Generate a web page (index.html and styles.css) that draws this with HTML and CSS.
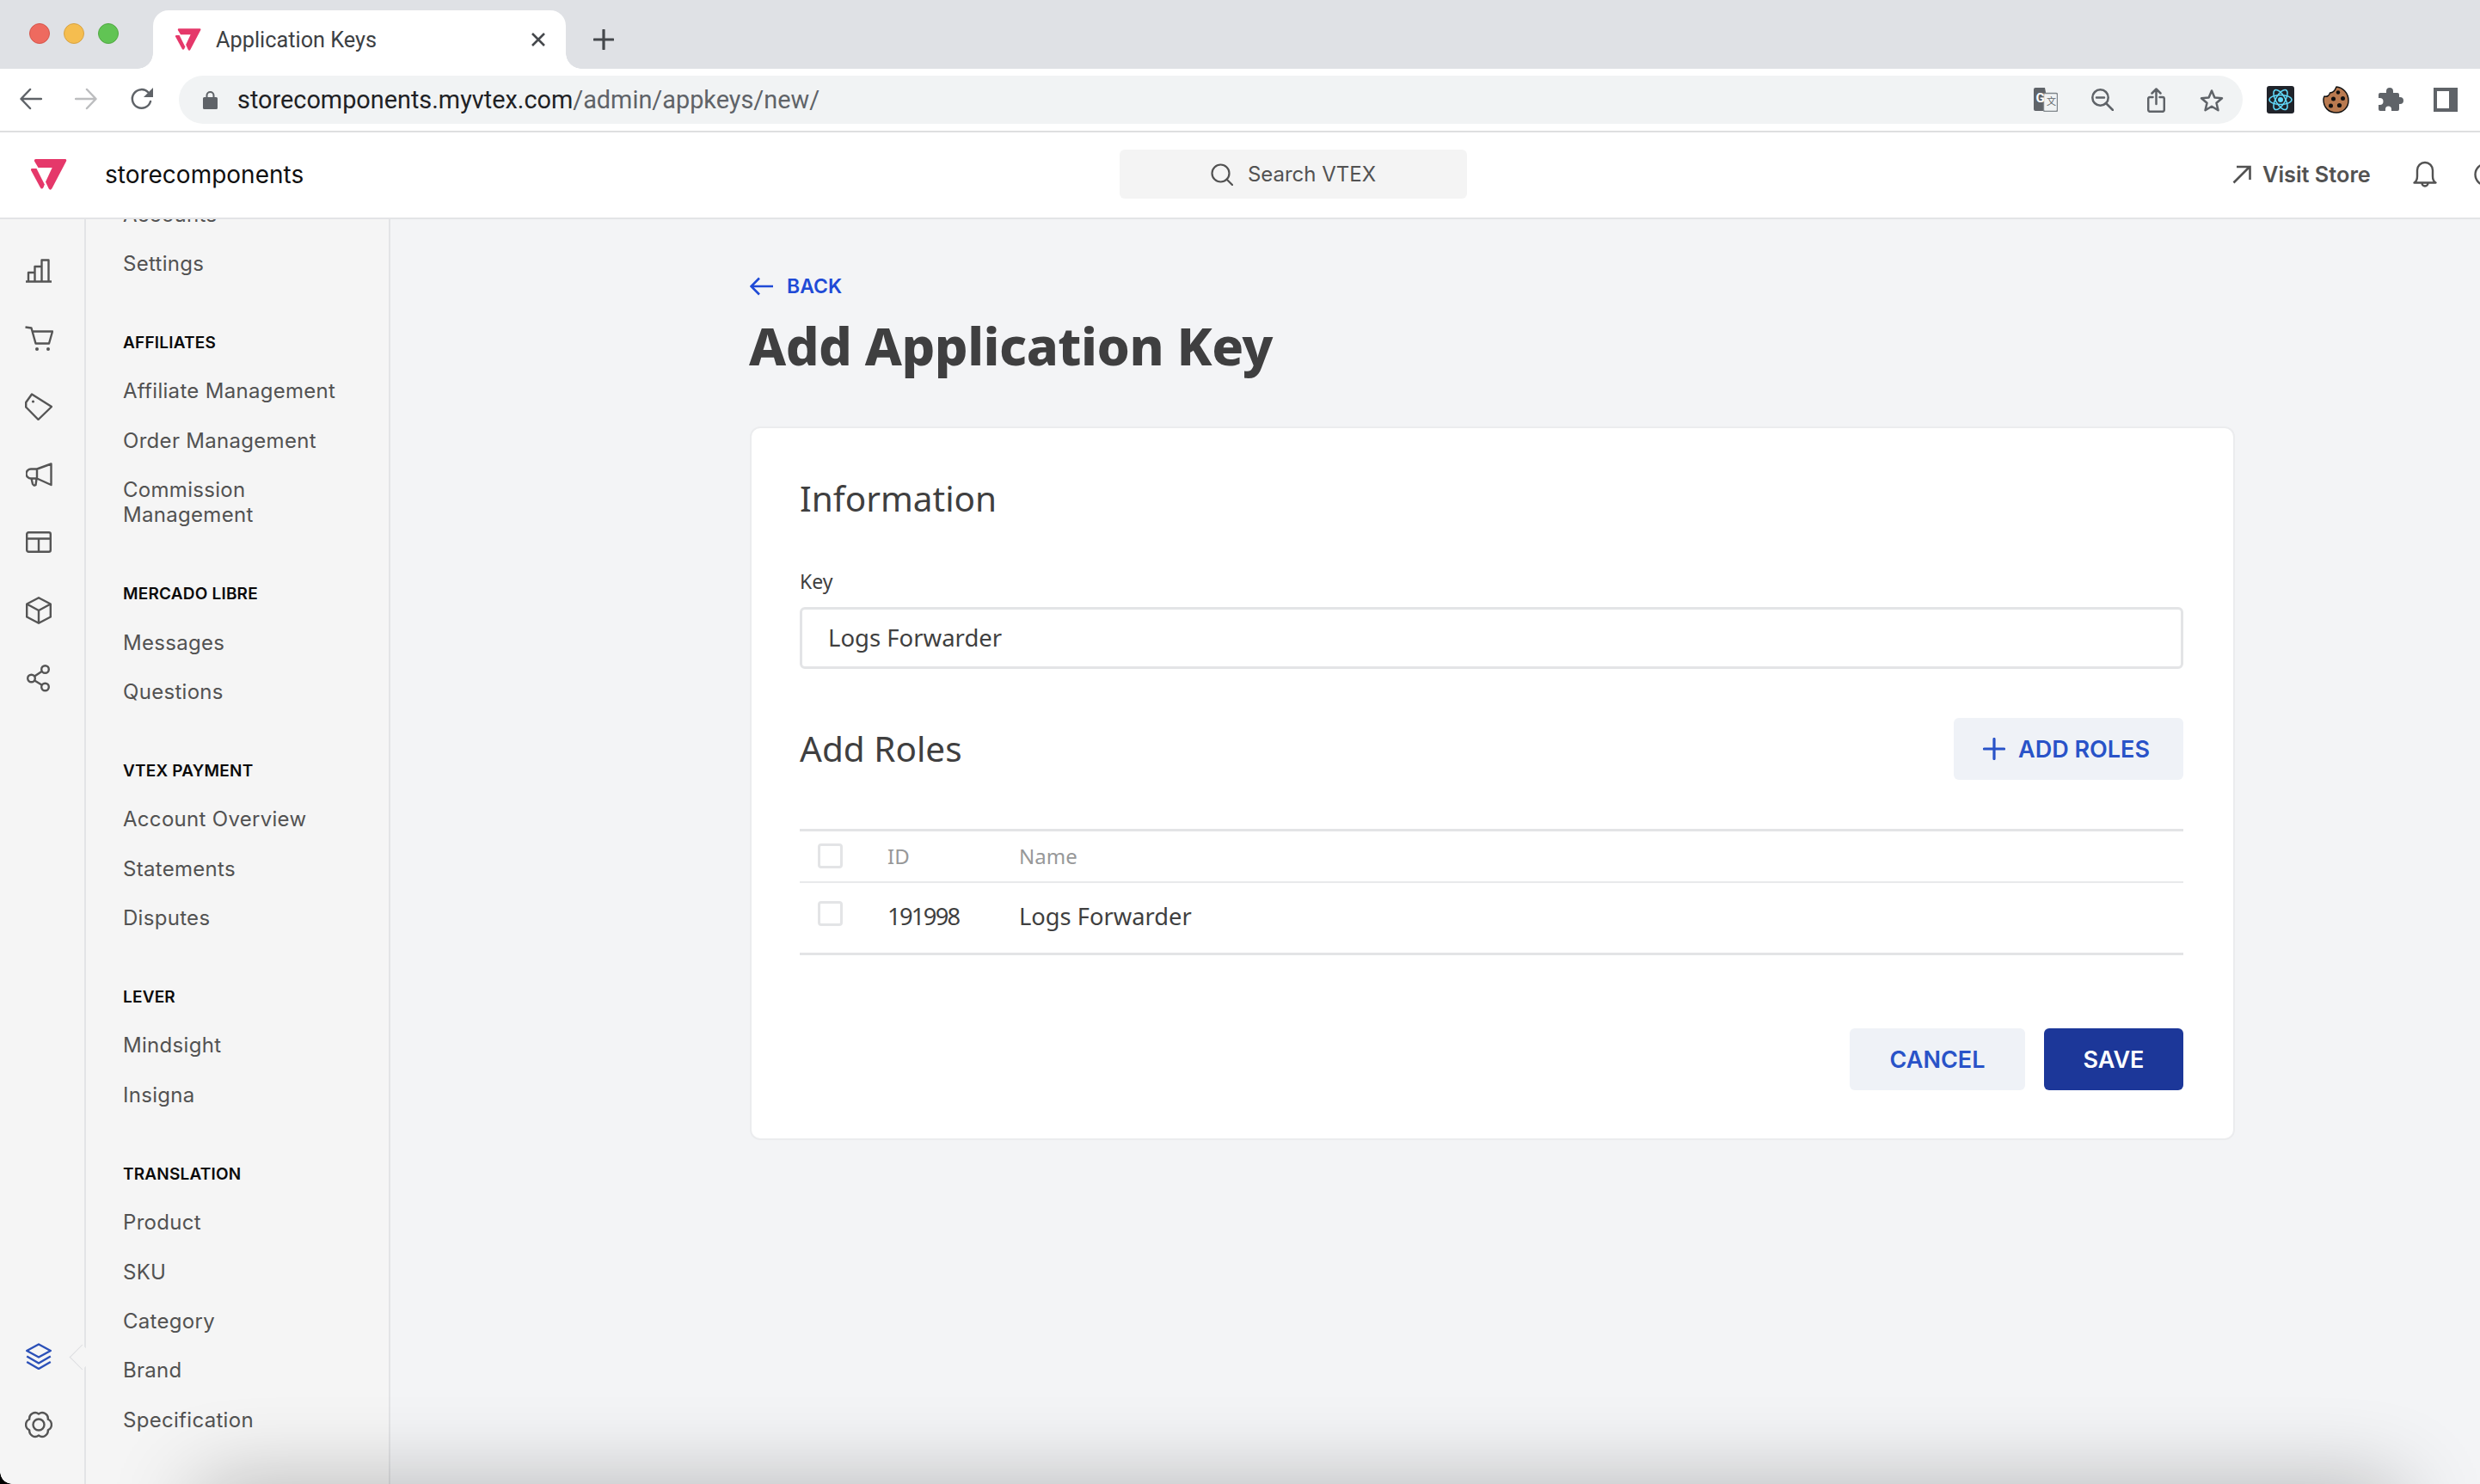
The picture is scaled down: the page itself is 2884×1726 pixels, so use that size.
FILE: index.html
```html
<!DOCTYPE html>
<html lang="en">
<head>
    <meta charset="UTF-8">
    <title>Application Keys</title>
    <link rel="stylesheet" href="styles.css">
</head>
<body>
    <svg class="sprite" xmlns="http://www.w3.org/2000/svg">
        <symbol id="vtex-logo" viewBox="0 0 42 36">
            <path d="M5.5 0H39.5Q42 0 41 2.5L24.5 34Q22.5 37.5 20.5 34L17 26.5L24.7 10H8.5L4 2.5Q3.5 0 5.5 0Z"/>
            <path d="M1 11H6.5L15.8 29.5L14.5 33Q12.5 36 10.8 33L0 13Q-.3 11 1 11Z"/>
        </symbol>
    </svg>

    <!-- Browser tabs -->
    <div class="tabstrip">
        <div class="lights">
            <span class="light light-red"></span>
            <span class="light light-yellow"></span>
            <span class="light light-green"></span>
        </div>
        <div class="tab">
            <svg class="tab-logo"><use href="#vtex-logo"/></svg>
            <span class="tab-title">Application Keys</span>
            <svg class="tab-close" viewBox="0 0 18 18"><path d="M2 2L16 16M16 2L2 16"/></svg>
        </div>
        <svg class="tab-new" viewBox="0 0 24 24"><path d="M12 1V23M1 12H23"/></svg>
    </div>

    <!-- Browser toolbar -->
    <div class="toolbar">
        <svg class="tool-back" viewBox="0 0 26 26"><path d="M25 13H2M12 2L1.5 13L12 24"/></svg>
        <svg class="tool-forward" viewBox="0 0 26 26"><path d="M1 13H24M14 2L24.5 13L14 24"/></svg>
        <svg class="tool-reload" viewBox="0 0 28 28"><path d="M24 17A10.800 10.800 0 1 1 21.500 6.500"/><path class="solid" d="M27 1V12H16Z"/></svg>
        <div class="omnibox">
            <svg class="lock" viewBox="0 0 17 22"><path class="solid" d="M1.500 8H3.500V6A5 5 0 0 1 13.500 6V8H15.500Q17 8 17 9.500V20.500Q17 22 15.500 22H1.500Q0 22 0 20.500V9.500Q0 8 1.500 8ZM5.500 8H11.500V6A3 3 0 0 0 5.500 6Z"/></svg>
            <span class="url">storecomponents.myvtex.com<span class="url-path">/admin/appkeys/new/</span></span>
            <div class="omni-actions">
                <svg class="act-translate" viewBox="0 0 28 28">
                    <path class="solid" d="M2 0H13L18 27H2Q0 27 0 25V2Q0 0 2 0Z"/>
                    <rect class="translate-page" x="11.500" y="6.500" width="16" height="21" rx="1.500"/>
                    <text class="translate-g" x="2.500" y="17">G</text>
                    <text class="translate-x" x="15" y="20">文</text>
                </svg>
                <svg class="act-zoom" viewBox="0 0 26 26"><circle cx="10.500" cy="10.500" r="9.200"/><path d="M6 10.500H15M17 17L25 25"/></svg>
                <svg class="act-share" viewBox="0 0 21 29"><path d="M6.500 11H3Q1.200 11 1.200 13V25.500Q1.200 27.800 3 27.800H18Q19.800 27.800 19.800 25.500V13Q19.800 11 18 11H14.500M10.500 19V1.500M5.500 6.500L10.500 1.500L15.500 6.500"/></svg>
                <svg class="act-star" viewBox="0 0 30 29"><path d="M15 3.500L18.400 11.500L27 12.200L20.500 17.800L22.500 26.200L15 21.700L7.500 26.200L9.500 17.800L3 12.200L11.600 11.500Z"/></svg>
            </div>
        </div>
        <div class="extensions">
            <svg class="ext-react" viewBox="0 0 32 32">
                <rect width="32" height="32" rx="3" fill="#20232a"/>
                <g fill="none" stroke="#61dafb" stroke-width="1.500">
                    <ellipse cx="16" cy="16" rx="13" ry="5.500"/>
                    <ellipse cx="16" cy="16" rx="13" ry="5.500" transform="rotate(60 16 16)"/>
                    <ellipse cx="16" cy="16" rx="13" ry="5.500" transform="rotate(120 16 16)"/>
                </g>
                <circle cx="16" cy="16" r="3" fill="#61dafb"/>
            </svg>
            <svg class="ext-cookie" viewBox="0 0 31 32">
                <path d="M16 1C23 1.500 30 8 30 17C30 25 24 31 16 31C7 31 1 25 1 16C1 14.500 1.500 13 2 12C5 13 8 11 8.500 8C11.500 8 14.500 5 16 1Z"/>
                <circle cx="18" cy="7.500" r="2.200" fill="#111"/>
                <circle cx="12.500" cy="15" r="2.500" fill="#111"/>
                <circle cx="23.500" cy="14.500" r="2.500" fill="#111"/>
                <circle cx="9.500" cy="23" r="2.500" fill="#111"/>
                <circle cx="19.500" cy="22.500" r="2.600" fill="#111"/>
            </svg>
            <svg class="ext-puzzle" viewBox="0 0 29 29"><path d="M2 6H9V4A4 4 0 0 1 17 4V6H22Q24 6 24 8V11H25A4 4 0 0 1 25 19H24V25Q24 27 22 27H15V25A3.500 3.500 0 0 0 8 25V27H2Q0 27 0 25V20H1.500A4 4 0 0 0 1.500 12H0V8Q0 6 2 6Z"/></svg>
            <svg class="ext-panel" viewBox="0 0 28 28"><path d="M0 0H28V28H0ZM4 4V24H18V4Z" fill-rule="evenodd"/></svg>
        </div>
    </div>

    <!-- VTEX admin -->
    <header class="topbar">
        <div class="brand">
            <svg class="brand-logo"><use href="#vtex-logo"/></svg>
            <span class="brand-name">storecomponents</span>
        </div>
        <div class="search">
            <svg viewBox="0 0 26 26"><circle cx="11.500" cy="11.500" r="10"/><path d="M18.500 18.500L25 25"/></svg>
            <span>Search VTEX</span>
        </div>
        <div class="top-actions">
            <svg class="visit-arrow" viewBox="0 0 22 22"><path d="M1.500 20.500L20 2M5 2H20.500V17"/></svg>
            <span class="visit-label">Visit Store</span>
            <svg class="bell" viewBox="0 0 28 32"><path d="M1.500 25.500Q5 23.500 5 18V11A9 9 0 0 1 23 11V18Q23 23.500 26.500 25.500ZM10.500 26A3.500 3.500 0 0 0 17.500 26"/></svg>
            <svg class="help" viewBox="0 0 28 28"><circle cx="14" cy="14" r="12.500"/></svg>
        </div>
    </header>

    <div class="workspace">
        <aside class="rail">
            <div class="rail-group">
                <div class="rail-item"><svg viewBox="0 0 32 28" width="32" height="28"><path d="M1 26.500H31M4 26.500V16H11.500V26.500M11.500 26.500V9H19.500V26.500M19.500 26.500V1.500H27.500V26.500"/></svg></div>
                <div class="rail-item"><svg viewBox="0 0 33 30" width="33" height="30"><path d="M.5 1.500L7.500 2.500L12.500 20.500H28L32 6.500H9"/><circle class="solid" cx="14" cy="27" r="2"/><circle class="solid" cx="27" cy="27" r="2"/></svg></div>
                <div class="rail-item"><svg viewBox="0 0 32 32" width="32" height="32"><path d="M1.200 11L8 1.500L31 16L15.500 31L1.200 16.500Z"/><circle class="solid" cx="9.500" cy="10" r="1.600"/></svg></div>
                <div class="rail-item"><svg viewBox="0 0 31 28" width="31" height="28"><path d="M29.500 1.500V26L13 18.500H6A5.500 5.500 0 0 1 6 7.500H13ZM13 7.500V18.500M6.500 18.500L8 25Q9.500 27.500 11.500 26L12.500 19"/></svg></div>
                <div class="rail-item"><svg viewBox="0 0 30 25" width="30" height="25"><rect x="1.200" y="1.200" width="27.600" height="22.600" rx="2"/><path d="M1.200 8.500H28.800M15 8.500V23.800"/></svg></div>
                <div class="rail-item"><svg viewBox="0 0 30 32" width="30" height="32"><path d="M15 1.200L28.800 8.500V23.500L15 30.800L1.200 23.500V8.500ZM1.200 8.500L15 16L28.800 8.500M15 16V30.800"/></svg></div>
                <div class="rail-item"><svg viewBox="0 0 29 32" width="29" height="32"><circle cx="21.500" cy="5.500" r="4.300"/><circle cx="5.500" cy="16" r="4.300"/><circle cx="21.500" cy="26" r="4.300"/><path d="M17.800 7.800L9.200 13.600M9.200 18.400L17.800 23.700"/></svg></div>
            </div>
            <div class="rail-group">
                <div class="rail-item rail-item-active"><svg viewBox="0 0 30 31" width="30" height="31"><path d="M15 1.500L28.800 9L15 16.500L1.200 9ZM1.200 15.500L15 23.500L28.800 15.500M1.200 22L15 30L28.800 22"/></svg></div>
                <div class="rail-item"><svg viewBox="0 0 32 32" width="32" height="32"><path d="M16 3.500A6.800 6.800 0 0 1 26.800 9.750A6.800 6.800 0 0 1 26.800 22.250A6.800 6.800 0 0 1 16 28.500A6.800 6.800 0 0 1 5.200 22.250A6.800 6.800 0 0 1 5.200 9.750A6.800 6.800 0 0 1 16 3.500Z"/><circle cx="16" cy="16" r="6.500"/></svg></div>
            </div>
        </aside>

        <nav class="sidenav">
            <div class="nav-scroll">
                <section class="nav-section">
                    <a class="nav-link">Accounts</a>
                    <a class="nav-link">Settings</a>
                </section>
                <section class="nav-section">
                    <h4 class="nav-title">AFFILIATES</h4>
                    <a class="nav-link">Affiliate Management</a>
                    <a class="nav-link">Order Management</a>
                    <a class="nav-link">Commission<br>Management</a>
                </section>
                <section class="nav-section">
                    <h4 class="nav-title">MERCADO LIBRE</h4>
                    <a class="nav-link">Messages</a>
                    <a class="nav-link">Questions</a>
                </section>
                <section class="nav-section">
                    <h4 class="nav-title">VTEX PAYMENT</h4>
                    <a class="nav-link">Account Overview</a>
                    <a class="nav-link">Statements</a>
                    <a class="nav-link">Disputes</a>
                </section>
                <section class="nav-section">
                    <h4 class="nav-title">LEVER</h4>
                    <a class="nav-link">Mindsight</a>
                    <a class="nav-link">Insigna</a>
                </section>
                <section class="nav-section">
                    <h4 class="nav-title">TRANSLATION</h4>
                    <a class="nav-link">Product</a>
                    <a class="nav-link">SKU</a>
                    <a class="nav-link">Category</a>
                    <a class="nav-link">Brand</a>
                    <a class="nav-link">Specification</a>
                </section>
            </div>
        </nav>

        <main class="content">
            <a class="back-link">
                <svg viewBox="0 0 28 22"><path d="M27 11H2M11 1.500L1.500 11L11 20.500"/></svg>
                <span>BACK</span>
            </a>
            <h1 class="page-title">Add Application Key</h1>

            <div class="card">
                <h2 class="card-heading">Information</h2>
                <label class="field-label">Key</label>
                <div class="text-field">Logs Forwarder</div>

                <div class="roles-head">
                    <h2 class="card-heading">Add Roles</h2>
                    <button class="btn btn-light btn-add">
                        <svg viewBox="0 0 26 26"><path d="M13 1.500V24.500M1.500 13H24.500"/></svg>
                        ADD ROLES
                    </button>
                </div>

                <div class="roles-table">
                    <div class="table-row table-row-head">
                        <span class="checkbox"></span>
                        <span>ID</span>
                        <span>Name</span>
                    </div>
                    <div class="table-row">
                        <span class="checkbox"></span>
                        <span class="cell-id">191998</span>
                        <span>Logs Forwarder</span>
                    </div>
                </div>

                <div class="form-actions">
                    <button class="btn btn-light btn-cancel">CANCEL</button>
                    <button class="btn btn-primary btn-save">SAVE</button>
                </div>
            </div>
        </main>
    </div>

    <!-- Window edge: shadow of whatever sits below, and the rounded corner -->
    <div class="under-shadow"></div>
    <div class="window-corner"></div>
</body>
</html>
```

FILE: styles.css
```css
* {
    box-sizing: border-box;
}
html, body {
    margin: 0;
    height: 100%;
}
body {
    position: relative;
    width: 2884px;
    height: 1726px;
    overflow: hidden;
    display: flex;
    flex-direction: column;
    font-family: Inter, "Liberation Sans", sans-serif;
    color: #3f3f40;
    background-color: #f3f4f6;
}
svg {
    display: block;
    flex: none;
}
.sprite {
    position: absolute;
    width: 0;
    height: 0;
}

/* tabs */
.tabstrip {
    height: 80px;
    flex: none;
    display: flex;
    background-color: #dfe1e5;
    padding-left: 34px;
}
.lights {
    display: flex;
    gap: 16px;
    padding-top: 27px;
    width: 144px;
}
.light {
    width: 24px;
    height: 24px;
    border-radius: 50%;
}
.light-red { background-color: #ee6a5f; border: 1px solid #d5564c; }
.light-yellow { background-color: #f5bd4f; border: 1px solid #d6a243; }
.light-green { background-color: #61c454; border: 1px solid #52a843; }
.tab {
    position: relative;
    width: 480px;
    height: 68px;
    margin-top: 12px;
    background-color: white;
    border-radius: 18px 18px 0 0;
    display: flex;
    align-items: center;
    padding: 0 23px 0 26px;
}
.tab::before,
.tab::after {
    content: "";
    position: absolute;
    bottom: 0;
    width: 18px;
    height: 18px;
}
.tab::before {
    left: -18px;
    background: radial-gradient(circle at 0 0, #dfe1e5 17.500px, white 18px);
}
.tab::after {
    right: -18px;
    background: radial-gradient(circle at 100% 0, #dfe1e5 17.500px, white 18px);
}
.tab-logo {
    width: 30px;
    height: 26px;
    fill: #e5386a;
}
.tab-title {
    margin-left: 17px;
    font: 25.300px Roboto, sans-serif;
    color: #3c4043;
}
.tab-close {
    width: 18px;
    height: 18px;
    margin-left: auto;
    fill: none;
    stroke: #45484c;
    stroke-width: 2.600;
}
.tab-new {
    width: 24px;
    height: 24px;
    margin: 34px 0 0 32px;
    fill: none;
    stroke: #45484c;
    stroke-width: 3.200;
    stroke-linecap: round;
}

/* toolbar */
.toolbar {
    height: 74px;
    flex: none;
    display: flex;
    align-items: flex-start;
    background-color: white;
    border-bottom: 2px solid #dedfe0;
    padding: 8px 26px 0 23px;
}
.toolbar svg path,
.toolbar .act-zoom circle {
    fill: none;
    stroke: #5f6368;
    stroke-width: 2.500;
    stroke-linecap: round;
    stroke-linejoin: round;
}
.toolbar svg .solid {
    fill: #5f6368;
    stroke: none;
}
.tool-back,
.tool-forward {
    width: 26px;
    height: 26px;
    margin-top: 14px;
}
.tool-forward {
    margin-left: 38px;
}
.toolbar .tool-forward path {
    stroke: #bcbdbf;
}
.tool-reload {
    width: 28px;
    height: 28px;
    margin: 13px 0 0 38px;
}
.omnibox {
    width: 2400px;
    height: 56px;
    margin-left: 29px;
    display: flex;
    align-items: center;
    background-color: #f1f3f4;
    border-radius: 28px;
    padding: 0 21px 0 28px;
}
.lock {
    width: 17px;
    height: 22px;
}
.url {
    margin-left: 23px;
    font: 28.850px Roboto, sans-serif;
    color: #202124;
}
.url-path {
    color: #5f6368;
}
.omni-actions {
    margin-left: auto;
    display: flex;
    align-items: center;
    gap: 39px;
}
.act-translate {
    width: 28px;
    height: 28px;
}
.toolbar .translate-page {
    fill: #f1f3f4;
    stroke: #80868b;
    stroke-width: 1.400;
}
.translate-g {
    font: bold 15px Roboto, sans-serif;
    fill: white;
}
.translate-x {
    font: 11px "Noto Sans CJK SC", sans-serif;
    fill: #5f6368;
}
.act-zoom {
    width: 26px;
    height: 26px;
}
.act-share {
    width: 21px;
    height: 29px;
}
.act-star {
    width: 30px;
    height: 29px;
}
.extensions {
    display: flex;
    align-items: center;
    height: 56px;
}
.ext-react {
    width: 32px;
    height: 32px;
    margin-left: 28px;
}
.ext-cookie {
    width: 31px;
    height: 32px;
    margin-left: 33px;
}
.toolbar .ext-cookie path {
    fill: #b97a50;
    stroke: #111;
    stroke-width: 1.500;
}
.ext-puzzle {
    width: 29px;
    height: 29px;
    margin-left: 34px;
}
.toolbar .ext-puzzle path {
    fill: #5f6368;
    stroke: none;
}
.ext-panel {
    width: 28px;
    height: 28px;
    margin-left: 35px;
}
.toolbar .ext-panel path {
    fill: #5f6368;
    stroke: none;
}

/* admin top bar */
.topbar {
    height: 101px;
    flex: none;
    display: flex;
    align-items: center;
    background-color: white;
    border-bottom: 2px solid #e3e4e6;
    padding-bottom: 2px;
    overflow: hidden;
}
.brand {
    width: 1302px;
    flex: none;
    display: flex;
    align-items: center;
    padding-left: 36px;
}
.brand-logo {
    width: 42px;
    height: 36px;
    fill: #e5386a;
}
.brand-name {
    margin-left: 44px;
    font-size: 28px;
    color: #0f0f10;
}
.search {
    width: 404px;
    height: 57px;
    flex: none;
    display: flex;
    align-items: center;
    justify-content: center;
    gap: 17px;
    background-color: #f4f4f4;
    border-radius: 6px;
    font-size: 24px;
    color: #525252;
}
.search svg {
    width: 26px;
    height: 26px;
    fill: none;
    stroke: #525252;
    stroke-width: 2.200;
    stroke-linecap: round;
}
.top-actions {
    display: flex;
    align-items: center;
    padding-left: 890px;
    color: #525252;
}
.visit-arrow {
    width: 22px;
    height: 22px;
    fill: none;
    stroke: #525252;
    stroke-width: 2.600;
}
.visit-label {
    margin-left: 13px;
    font-size: 25.300px;
    font-weight: 600;
    white-space: nowrap;
}
.bell {
    width: 28px;
    height: 32px;
    margin-left: 49px;
    fill: none;
    stroke: #525252;
    stroke-width: 2.400;
    stroke-linejoin: round;
}
.help {
    width: 28px;
    height: 28px;
    margin-left: 43px;
    fill: none;
    stroke: #525252;
    stroke-width: 2.400;
}

/* sidebar */
.workspace {
    flex: 1;
    display: flex;
    min-height: 0;
}
.rail {
    width: 100px;
    flex: none;
    display: flex;
    flex-direction: column;
    justify-content: space-between;
    padding: 20px 8px 30px 0;
    background-color: #f5f5f5;
    border-right: 2px solid #e3e4e6;
}
.rail-item {
    height: 79px;
    display: flex;
    align-items: center;
    justify-content: center;
    position: relative;
}
.rail-item svg {
    fill: none;
    stroke: #555;
    stroke-width: 2.400;
    stroke-linejoin: round;
}
.rail-item svg .solid {
    fill: #555;
    stroke: none;
}
.rail-item-active svg {
    stroke: #2b50b8;
}
.rail-item-active::after {
    content: "";
    position: absolute;
    right: -16px;
    top: 30px;
    width: 20px;
    height: 20px;
    background-color: #f5f5f5;
    border-left: 1px solid #dcdde0;
    border-bottom: 1px solid #dcdde0;
    transform: rotate(45deg);
}
.sidenav {
    width: 354px;
    flex: none;
    background-color: #f5f5f5;
    border-right: 2px solid #e3e4e6;
    overflow: hidden;
}
.nav-scroll {
    margin-top: -34.500px;
    padding-left: 43px;
}
.nav-section {
    margin-bottom: 49.500px;
}
.nav-title {
    margin: 0 0 13.500px;
    font-size: 19px;
    line-height: 28px;
    font-weight: 600;
    letter-spacing: .2px;
    color: #0a0a0a;
}
.nav-link {
    display: block;
    padding: 14.200px 0;
    font-size: 24px;
    line-height: 29px;
    letter-spacing: .3px;
    color: #525252;
}

/* main */
.content {
    flex: 1;
    padding: 63px 0 0 418px;
}
.back-link {
    display: flex;
    align-items: center;
    gap: 15px;
    height: 30px;
    font-size: 23px;
    font-weight: 600;
    color: #1f4ad6;
}
.back-link svg {
    width: 28px;
    height: 22px;
    fill: none;
    stroke: #1f4ad6;
    stroke-width: 2.600;
}
.page-title {
    margin: 20px 0 60px -1px;
    font: 800 61px/68px "Noto Sans", sans-serif;
    letter-spacing: -.5px;
    color: #3f3f40;
}
.card {
    width: 1727px;
    height: 830px;
    padding: 58px 58px 58px 56px;
    background-color: white;
    border: 2px solid #ebecee;
    border-radius: 12px;
}
.card-heading {
    margin: 0;
    font: normal 40.500px/48px "Noto Sans", sans-serif;
    color: #3f3f40;
}
.field-label {
    display: block;
    margin-top: 57px;
    font: 23px/30px "Noto Sans", sans-serif;
    color: #3f3f40;
}
.text-field {
    height: 72px;
    margin-top: 15px;
    padding-left: 30px;
    border: 3px solid #e3e4e6;
    border-radius: 6px;
    font: 27.500px/66px "Noto Sans", sans-serif;
    color: #3f3f40;
}
.roles-head {
    margin-top: 57px;
    display: flex;
    align-items: center;
    justify-content: space-between;
}
.btn {
    height: 72px;
    border: none;
    border-radius: 6px;
    font: 600 27px Inter, sans-serif;
    display: flex;
    align-items: center;
    justify-content: center;
}
.btn-light {
    background-color: #eff2f7;
    color: #2953c8;
}
.btn-primary {
    background-color: #1c3799;
    color: white;
}
.btn-add {
    width: 267px;
    gap: 15px;
    padding-right: 11px;
}
.btn-add svg {
    width: 26px;
    height: 26px;
    fill: none;
    stroke: #2953c8;
    stroke-width: 3.200;
    stroke-linecap: round;
}
.roles-table {
    margin-top: 57px;
    border-top: 3px solid #e3e4e6;
    border-bottom: 3px solid #e3e4e6;
}
.table-row {
    display: grid;
    grid-template-columns: 102px 153px 1fr;
    height: 81px;
    padding-top: 21px;
    font: 27.300px/36px "Noto Sans", sans-serif;
    color: #3f3f40;
}
.table-row-head {
    height: 60px;
    padding-top: 14px;
    border-bottom: 2px solid #e8e9eb;
    font-size: 24px;
    line-height: 30px;
    color: #979899;
}
.cell-id {
    letter-spacing: -1.700px;
}
.checkbox {
    width: 29px;
    height: 29px;
    margin-left: 21px;
    border: 3px solid #e3e4e6;
    border-radius: 4px;
}
.form-actions {
    margin-top: 85px;
    display: flex;
    justify-content: flex-end;
    gap: 22px;
}
.btn-cancel {
    width: 204px;
}
.btn-save {
    width: 162px;
}

/* window edge */
.under-shadow {
    position: absolute;
    left: 250px;
    right: 114px;
    top: 1750px;
    height: 40px;
    box-shadow: 0 0 100px 20px rgba(0, 0, 0, .3);
    pointer-events: none;
}
.window-corner {
    position: absolute;
    left: 0;
    bottom: 0;
    width: 14px;
    height: 14px;
    background: radial-gradient(circle at 100% 0, transparent 13.500px, black 14px);
}
```
